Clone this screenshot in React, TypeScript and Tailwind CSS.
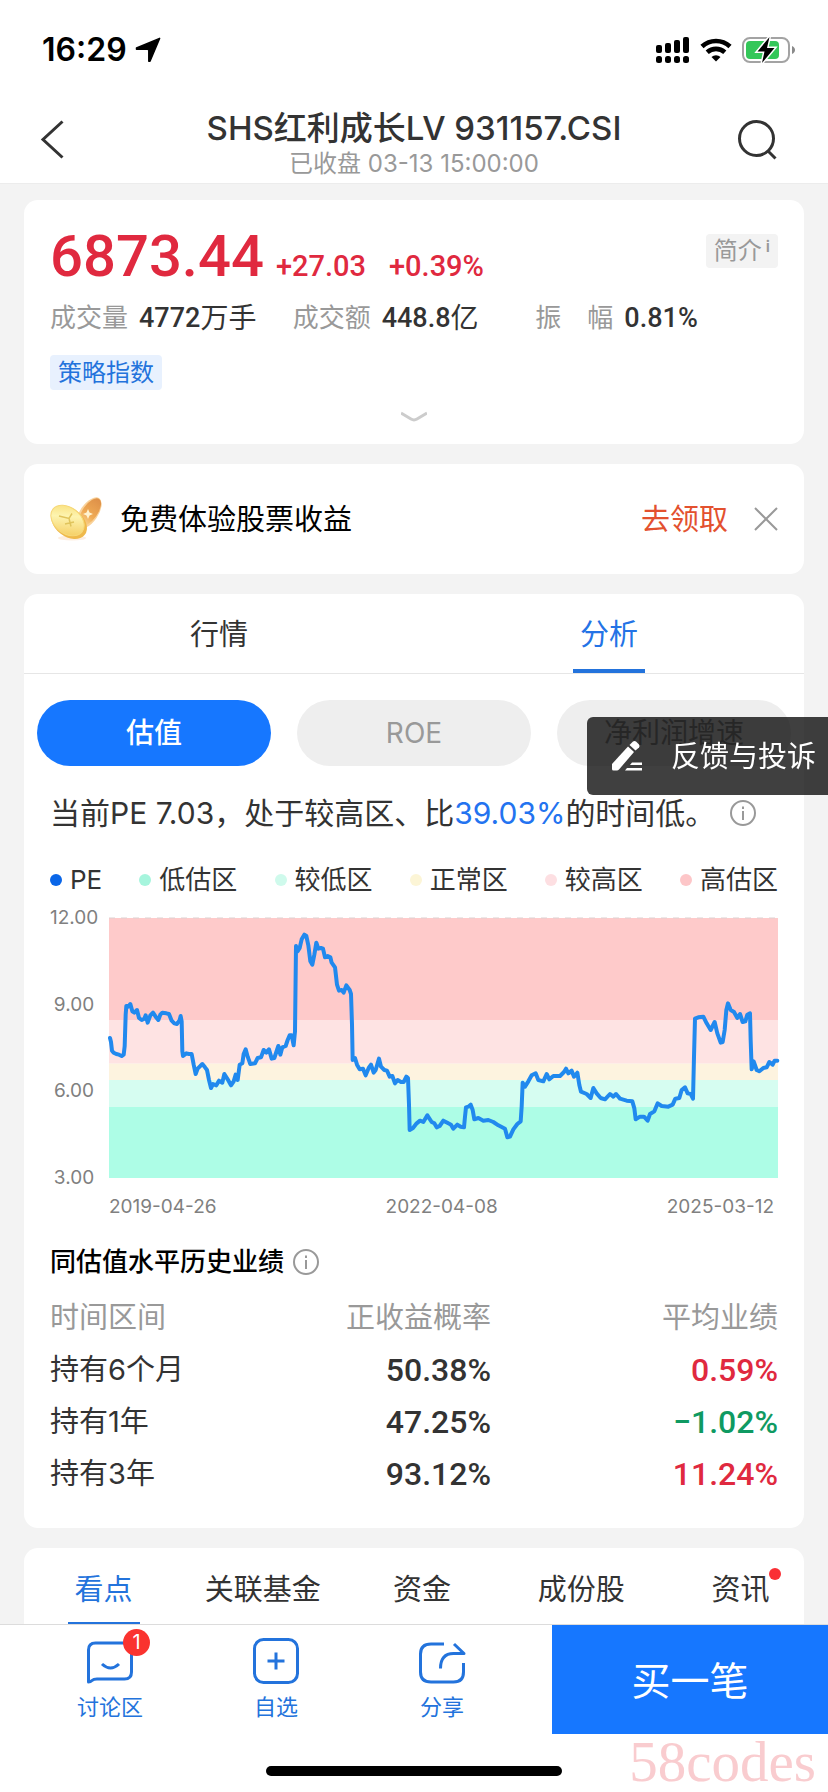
import { ReactNode } from "react";
import clsx from "clsx";

const STATS = [
  { label: "成交量", value: "4772", unit: "万手" },
  { label: "成交额", value: "448.8", unit: "亿" },
  { label: "振　幅", value: "0.81%", unit: "" },
];

const LEGEND = [
  { label: "PE", dot: "bg-[#0a66e8]" },
  { label: "低估区", dot: "bg-[#a6f5dd]" },
  { label: "较低区", dot: "bg-[#cffaec]" },
  { label: "正常区", dot: "bg-[#fcf5d6]" },
  { label: "较高区", dot: "bg-[#fddfe2]" },
  { label: "高估区", dot: "bg-[#fdc6c8]" },
];

const BANDS = [
  { y: 0, h: 306, fill: "#fecaca" },
  { y: 306, h: 131, fill: "#fee3e3" },
  { y: 437, h: 49, fill: "#fdf3df" },
  { y: 486, h: 81, fill: "#d6fdf1" },
  { y: 567, h: 213, fill: "#adfde6" },
];

// PE history, x: 0-2007 over the date range, y: 0 (12.00) to 780 (3.00)
const PE_LINE = [
  "3,360 6,372 9,398 14,404 22,408 30,410 38,414 44,410 47,385 50,290 52,264 58,266 64,258 70,280 76,284 84,276",
  "90,300 98,306 106,302 110,292 116,314 124,292 132,284 140,296 148,306 154,290 160,284 172,286 180,288 188,308",
  "196,316 204,318 212,306 215,294 218,310 220,400 222,414 232,406 240,408 248,408 254,440 260,468 266,452 272,446",
  "280,438 288,448 294,456 300,486 306,510 312,498 322,502 330,488 340,494 346,468 356,484 366,502 374,490 380,470",
  "386,486 392,440 400,436 404,408 410,394 416,416 424,438 438,436 446,420 456,418 464,396 472,404 480,394 488,422",
  "496,420 504,396 508,384 514,410 520,388 530,384 536,366 542,352 548,352 554,382 558,340 561,84 566,100 572,90",
  "578,64 586,50 592,54 598,82 604,130 610,140 616,110 622,74 628,92 636,90 642,92 648,118 656,114 664,118",
  "668,134 678,148 684,200 690,218 698,216 704,224 712,202 722,216 726,228 729,320 731,426 738,420 744,440 752,454",
  "762,452 770,472 780,448 786,440 794,464 800,456 810,422 816,446 826,456 834,458 842,476 850,474 858,496 866,486",
  "876,492 884,492 892,476 897,480 900,560 902,636 912,630 923,616 933,608 943,612 955,592 968,612 976,616 983,628",
  "992,624 1003,608 1018,616 1026,620 1033,632 1045,620 1055,626 1065,628 1068,596 1071,568 1078,566 1085,560 1091,576",
  "1096,604 1108,600 1123,608 1138,606 1153,612 1168,622 1188,632 1195,658 1203,656 1213,634 1225,618 1235,610",
  "1238,566 1241,494 1248,506 1258,490 1268,472 1280,466 1288,486 1303,490 1313,468 1321,484 1333,474 1353,474",
  "1365,462 1371,452 1378,466 1388,458 1395,476 1405,464 1411,501 1416,521 1433,528 1445,540 1453,510 1463,526",
  "1475,540 1488,544 1503,528 1513,536 1521,528 1533,542 1553,548 1570,550 1576,571 1580,604 1593,596 1605,596",
  "1616,608 1623,588 1636,580 1646,556 1658,564 1678,566 1691,560 1699,542 1711,540 1718,516 1728,508 1736,526",
  "1745,528 1752,542 1755,416 1758,302 1768,298 1783,296 1793,316 1805,336 1817,312 1825,346 1835,374 1841,372",
  "1847,336 1852,276 1857,256 1865,276 1875,282 1885,300 1893,288 1901,312 1909,310 1915,290 1923,286 1925,366",
  "1928,454 1934,430 1943,456 1951,460 1963,450 1973,448 1981,432 1991,440 1997,428 2005,428",
].join(" ");

const RETURNS = [
  { period: "持有6个月", odds: "50.38%", avg: "0.59%", up: true },
  { period: "持有1年", odds: "47.25%", avg: "−1.02%", up: false },
  { period: "持有3年", odds: "93.12%", avg: "11.24%", up: true },
];

const SECTIONS = ["看点", "关联基金", "资金", "成份股", "资讯"];

function InfoIcon() {
  return (
    <svg className="size-[26px]" viewBox="0 0 26 26" fill="none" stroke="#999" strokeWidth="2">
      <circle cx="13" cy="13" r="12" />
      <path d="M13 11v9M13 6.5v2.4" />
    </svg>
  );
}

function StatusBar() {
  return (
    <div className="flex h-[88px] items-center justify-between pt-3 pr-8 pl-[42px]">
      <div className="flex items-center gap-2 text-[32px] leading-10 font-semibold text-black">
        16:29
        <svg className="size-[26px]" viewBox="0 0 26 26" stroke="#000" strokeWidth="1.5" strokeLinejoin="round">
          <path d="M24.600 1.400L15 24.300h-1.200V13.200L12.800 12.200H1.500V11z" />
        </svg>
      </div>
      <div className="flex items-center gap-2.5">
        <svg className="h-[26px] w-[34px]" viewBox="0 0 34 26">
          <rect x="0" y="8" width="6" height="8" rx="2" />
          <rect x="9" y="6" width="6" height="10" rx="2" />
          <rect x="18" y="3" width="6" height="13" rx="2" />
          <rect x="27" y="0" width="6" height="16" rx="2" />
          <rect x="0" y="19" width="6" height="7" rx="2.500" />
          <rect x="9" y="19" width="6" height="7" rx="2.500" />
          <rect x="18" y="19" width="6" height="7" rx="2.500" />
          <rect x="27" y="19" width="6" height="7" rx="2.500" />
        </svg>
        <svg className="h-6 w-8" viewBox="0 0 32 24" fill="none" stroke="#000" strokeWidth="4.600">
          <path d="M2 8.500a20.500 20.500 0 0 1 28 0" />
          <path d="M7.200 14.300a13 13 0 0 1 17.600 0" />
          <path d="M16 23.500l-4.500-4.500a6.500 6.500 0 0 1 9 0z" fill="#000" stroke="none" />
        </svg>
        <svg className="h-[26px] w-[54px]" viewBox="0 0 54 26">
          <rect x="1" y="1" width="46" height="24" rx="7" fill="#fff" stroke="#a3a3a3" strokeWidth="2" />
          <rect x="4" y="4" width="33" height="18" rx="4" fill="#34c759" />
          <path d="M50 9c4 1.500 4 6.500 0 8z" fill="#8a8a8a" />
          <path
            d="M27.500 0L15.500 14.500h7L20 26l12.500-15h-7.500z"
            stroke="#fff"
            strokeWidth="3"
            paintOrder="stroke"
          />
        </svg>
      </div>
    </div>
  );
}

function Header() {
  return (
    <header className="grid h-24 grid-cols-[1fr_auto_1fr] items-start border-b border-[#ececec] pr-[50px] pl-10">
      <button aria-label="返回" className="mt-8 w-fit">
        <svg className="h-[39px] w-6" viewBox="0 0 24 39" fill="none" stroke="#333" strokeWidth="3">
          <path d="M22.500 1.500L3 19.500l19.500 18" />
        </svg>
      </button>
      <div className="ml-2.5 pt-[22px] text-center">
        <h1 className="text-[33px] leading-9 font-medium text-[#333]">SHS红利成长LV 931157.CSI</h1>
        <p className="mt-1 text-2xl leading-7 text-[#999]">已收盘 03-13 15:00:00</p>
      </div>
      <button aria-label="搜索" className="mt-8 ml-auto">
        <svg className="size-10" viewBox="0 0 40 40" fill="none" stroke="#333" strokeWidth="3">
          <circle cx="18.500" cy="18.500" r="17" />
          <path d="M29.500 30.500l8 8" />
        </svg>
      </button>
    </header>
  );
}

function Quote() {
  return (
    <section className="rounded-[14px] bg-white px-[26px] pt-[26px] pb-[21px]">
      <div className="flex h-[60px] items-start justify-between">
        <div className="flex items-baseline font-['Roboto',sans-serif] font-medium text-[#e0293f]">
          <span className="text-[58px] leading-[60px]">6873.44</span>
          <span className="ml-3 text-[29px]">+27.03</span>
          <span className="ml-[23px] text-[29px]">+0.39%</span>
        </div>
        <button className="mt-2 flex h-[34px] items-start rounded-sm bg-[#f3f3f3] px-2 text-2xl leading-[34px] text-[#999]">
          简介<span className="ml-1 text-base leading-6 font-semibold">i</span>
        </button>
      </div>
      <dl className="mt-[14px] grid grid-cols-3 text-[26px] leading-9">
        {STATS.map((s) => (
          <div key={s.label} className="flex items-center gap-[11px]">
            <dt className="text-[#999]">{s.label}</dt>
            <dd className="flex items-center text-[#333]">
              <span className="font-['Roboto',sans-serif] text-[27px] font-medium">{s.value}</span>
              <span className="text-[28px]">{s.unit}</span>
            </dd>
          </div>
        ))}
      </dl>
      <span className="mt-[19px] block h-[35px] w-fit rounded-sm bg-[#e8f1fe] px-2 text-2xl leading-[35px] text-[#2373dc]">
        策略指数
      </span>
      <button aria-label="展开" className="mx-auto mt-[21px] block">
        <svg className="h-3 w-[26px]" viewBox="0 0 26 12" fill="none" stroke="#ccc" strokeWidth="3">
          <path d="M0 2l10 6q3 1.800 6 0L26 2" />
        </svg>
      </button>
    </section>
  );
}

function Coins() {
  return (
    <svg className="h-[44px] w-[52px]" viewBox="0 0 52 44">
      <defs>
        <linearGradient id="gold" x1="0" y1="0" x2="1" y2="1">
          <stop offset="0" stopColor="#f8d96a" />
          <stop offset=".4" stopColor="#fdf4b0" />
          <stop offset="1" stopColor="#f3c44f" />
        </linearGradient>
        <linearGradient id="amber" x1="0" y1="0" x2="0" y2="1">
          <stop offset="0" stopColor="#dd8f48" />
          <stop offset=".6" stopColor="#f0ab55" />
          <stop offset="1" stopColor="#fbdc9a" />
        </linearGradient>
      </defs>
      <ellipse cx="22" cy="41" rx="14" ry="2.500" fill="#fdeee0" />
      <ellipse cx="39" cy="16" rx="9" ry="18" transform="rotate(35 39 16)" fill="#f9d29a" />
      <ellipse cx="40" cy="15" rx="7.500" ry="16" transform="rotate(35 40 15)" fill="url(#amber)" />
      <path d="M38 12l1.500 3.500 3.500 1.500-3.500 1.500-1.500 3.500-1.500-3.500-3.500-1.500 3.500-1.500z" fill="#fff3d0" />
      <ellipse cx="19" cy="25.500" rx="20" ry="14" transform="rotate(38 19 25.500)" fill="#efb94b" />
      <ellipse cx="17.500" cy="23.500" rx="18.500" ry="13" transform="rotate(38 17.500 23.500)" fill="url(#gold)" stroke="#f6d878" />
      <path d="M9 19l10 2.500 3-5M19 21.500l2 8M15 27l9-2" fill="none" stroke="#e0c45c" strokeWidth="1.500" />
    </svg>
  );
}

function Promo() {
  return (
    <section className="mt-5 flex h-[110px] items-center rounded-[14px] bg-white px-[26px] text-[29px]">
      <Coins />
      <p className="ml-[18px] pt-0.5 text-black">免费体验股票收益</p>
      <a href="#claim" className="ml-auto pt-0.5 text-[#e3512f]">
        去领取
      </a>
      <button aria-label="关闭" className="ml-[26px]">
        <svg className="size-6" viewBox="0 0 24 24" fill="none" stroke="#999" strokeWidth="2">
          <path d="M1 1l22 22M23 1L1 23" />
        </svg>
      </button>
    </section>
  );
}

function PeChart() {
  return (
    <div className="mt-[22px] text-[19px] leading-6 text-[#808080]">
      <div className="flex">
        <div className="-my-3 mr-[11px] flex w-12 flex-col justify-between text-center">
          <span>12.00</span>
          <span>9.00</span>
          <span>6.00</span>
          <span>3.00</span>
        </div>
        <svg className="h-[260px] min-w-0 flex-1 overflow-visible" viewBox="0 0 2007 780" preserveAspectRatio="none">
          {BANDS.map((b) => (
            <rect key={b.y} x="0" y={b.y} width="2007" height={b.h} fill={b.fill} />
          ))}
          <path d="M0 0H2007" stroke="#ddd0d0" strokeDasharray="6 6" vectorEffect="non-scaling-stroke" />
          <polyline
            points={PE_LINE}
            fill="none"
            stroke="#2189ee"
            strokeWidth="4"
            strokeLinejoin="round"
            strokeLinecap="round"
            vectorEffect="non-scaling-stroke"
          />
        </svg>
      </div>
      <div className="mt-[17px] flex justify-between pr-1 pl-[59px]">
        <span>2019-04-26</span>
        <span>2022-04-08</span>
        <span>2025-03-12</span>
      </div>
    </div>
  );
}

function Analysis() {
  return (
    <section className="mt-5 rounded-[14px] bg-white pb-7">
      <div className="grid h-20 grid-cols-2 border-b border-[#e6e6e6] text-[29px]">
        <button className="pt-0.5 text-[#333]">行情</button>
        <button className="relative pt-0.5 text-[#2373e6]">
          分析
          <span className="absolute bottom-0 left-1/2 h-1 w-[72px] -translate-x-1/2 bg-[#2373dc]" />
        </button>
      </div>
      <div className="grid grid-cols-3 gap-[26px] px-[13px] pt-[26px] text-[28px]">
        <button className="h-[66px] rounded-full bg-[#1677ff] font-medium text-white">估值</button>
        <button className="h-[66px] rounded-full bg-[#eee] text-[#999]">ROE</button>
        <button className="h-[66px] rounded-full bg-[#eee] text-[#999]">净利润增速</button>
      </div>
      <div className="px-[26px]">
        <p className="mt-[27px] flex items-center text-[30px] leading-10 text-[#333]">
          当前PE 7.03，处于较高区、比<span className="text-[#2373f0]">39.03%</span>的时间低。
          <button aria-label="说明" className="ml-[15px]">
            <InfoIcon />
          </button>
        </p>
        <ul className="mt-[31px] flex justify-between text-[26px] leading-8 text-[#333]">
          {LEGEND.map((l) => (
            <li key={l.label} className="flex items-center gap-2">
              <span className={clsx("size-3 rounded-full", l.dot)} />
              {l.label}
            </li>
          ))}
        </ul>
        <PeChart />
        <h2 className="mt-[27px] flex items-center gap-[9px] text-[26px] leading-8 font-medium text-black">
          同估值水平历史业绩
          <InfoIcon />
        </h2>
        <table className="mt-[14px] w-full table-fixed text-[29px] text-[#333]">
          <thead>
            <tr className="h-[52px] text-[#999]">
              <th className="text-left font-normal">时间区间</th>
              <th className="text-right font-normal">正收益概率</th>
              <th className="w-[287px] text-right font-normal">平均业绩</th>
            </tr>
          </thead>
          <tbody>
            {RETURNS.map((r) => (
              <tr key={r.period} className="h-[52px] leading-[52px]">
                <td>{r.period}</td>
                <td className="text-right font-['Roboto',sans-serif] text-[32px] font-medium">{r.odds}</td>
                <td
                  className={clsx(
                    "text-right font-['Roboto',sans-serif] text-[32px] font-medium",
                    r.up ? "text-[#e0293f]" : "text-[#0f9a62]"
                  )}
                >
                  {r.avg}
                </td>
              </tr>
            ))}
          </tbody>
        </table>
      </div>
    </section>
  );
}

function Sections() {
  return (
    <nav className="mt-5 overflow-hidden rounded-t-[14px] bg-white">
      <div className="-mr-4 grid h-[84px] grid-cols-5 text-[29px] text-[#333]">
        {SECTIONS.map((s, i) => (
          <button key={s} className={clsx("relative", i === 0 && "text-[#2373dc]")}>
            <span className="relative">
              {s}
              {s === "资讯" && <span className="absolute -top-1 -right-3 size-3 rounded-full bg-[#fa2f35]" />}
            </span>
            {i === 0 && <span className="absolute bottom-1.5 left-1/2 h-1 w-[72px] -translate-x-1/2 bg-[#2373dc]" />}
          </button>
        ))}
      </div>
    </nav>
  );
}

function BarButton({ label, badge, children }: { label: string; badge?: number; children: ReactNode }) {
  return (
    <button className="flex flex-1 flex-col items-center pt-3 text-[22px] leading-8 text-[#2373dc]">
      <span className="relative">
        <svg className="size-12" viewBox="0 0 48 48" fill="none" stroke="#2373dc" strokeWidth="3">
          {children}
        </svg>
        {badge && (
          <span className="absolute -top-2 -right-4 size-[27px] rounded-full bg-[#fa332f] text-xl leading-[27px] text-white">
            {badge}
          </span>
        )}
      </span>
      <span className="mt-1.5">{label}</span>
    </button>
  );
}

function BottomBar() {
  return (
    <footer className="relative h-[168px] shrink-0 border-t border-[#dcdcdc] bg-white">
      <div className="grid h-[109px] grid-cols-3">
        <div className="col-span-2 flex px-[27px]">
          <BarButton label="讨论区" badge={1}>
            <path d="M2.500 45V13q0-7 7-7h29q7 0 7 7v22q0 7-7 7H11q-3.500 0-5 1.500-1.500 1.500-3.500 1.500z" strokeLinejoin="round" />
            <path d="M16 27q8.500 8 17 0" />
          </BarButton>
          <BarButton label="自选">
            <rect x="2.500" y="2.500" width="43" height="43" rx="9" />
            <path d="M24 15.500v17M15.500 24h17" />
          </BarButton>
          <BarButton label="分享">
            <path d="M26 7H13q-10.500 0-10.500 10v18q0 10 10.500 10h22.500q10 0 10-10v-9" />
            <path d="M22.500 31.500q0-15 13-15H46L36 7" strokeLinejoin="round" />
          </BarButton>
        </div>
        <button className="bg-[#1677ff] pt-1 text-[39px] text-white">买一笔</button>
      </div>
      <div className="mx-auto mt-8 h-2.5 w-[296px] rounded-full bg-black" />
      <span className="absolute right-3 bottom-0 font-['Liberation_Serif',serif] text-[57px] leading-[60px] text-[#f9cccf]">
        58codes
      </span>
    </footer>
  );
}

export default function App() {
  return (
    <div className="flex h-screen flex-col bg-white font-['Inter','Noto_Sans_CJK_SC',sans-serif]">
      <StatusBar />
      <Header />
      <main className="min-h-0 flex-1 overflow-y-auto bg-[#f3f3f3] px-6 pt-4 [scrollbar-width:none]">
        <Quote />
        <Promo />
        <Analysis />
        <Sections />
      </main>
      <BottomBar />
      <button className="fixed top-[717px] right-0 flex h-[78px] items-center rounded-l-md bg-black/75 pr-3 pl-6 text-[29px] text-white">
        <svg className="mr-7 size-8" viewBox="0 0 32 32" fill="#fff">
          <path d="M1 24L17 6.500l6 5.500L8 29.500q-1 1-2 1H2.500Q1 30.500 1 29z" />
          <path d="M18.500 5L22 1.500q1.500-1.200 3 0l3 3q1.200 1.500 0 3L24.500 10.500z" />
          <path d="M21 22.500h10v2.500H19zM16 28h15v2.500H14z" />
        </svg>
        <span className="pt-0.5">反馈与投诉</span>
      </button>
    </div>
  );
}
